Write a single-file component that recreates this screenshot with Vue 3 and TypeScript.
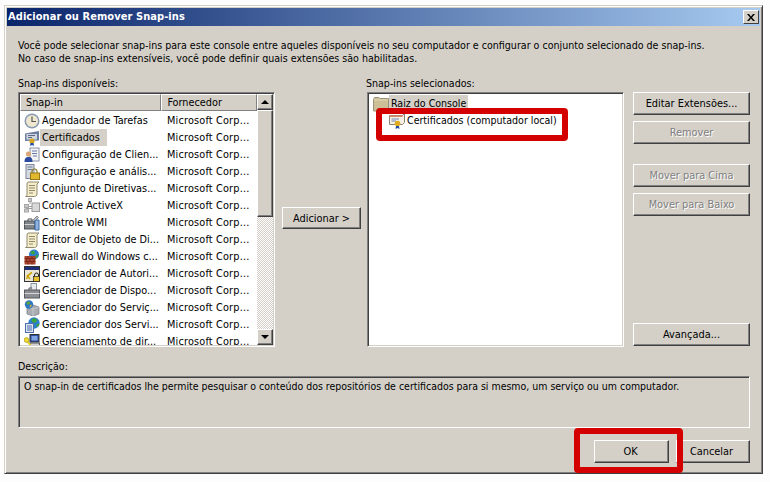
<script setup lang="ts">
interface Snapin { name: string; icon: string; selected?: boolean }
const snapins: Snapin[] = [
  { name: 'Agendador de Tarefas', icon: 'clock' },
  { name: 'Certificados', icon: 'cert', selected: true },
  { name: 'Configuração de Clien...', icon: 'client' },
  { name: 'Configuração e anális...', icon: 'lock' },
  { name: 'Conjunto de Diretivas...', icon: 'scroll' },
  { name: 'Controle ActiveX', icon: 'activex' },
  { name: 'Controle WMI', icon: 'wmi' },
  { name: 'Editor de Objeto de Di...', icon: 'scroll' },
  { name: 'Firewall do Windows c...', icon: 'firewall' },
  { name: 'Gerenciador de Autori...', icon: 'authz' },
  { name: 'Gerenciador de Dispo...', icon: 'device' },
  { name: 'Gerenciador do Serviç...', icon: 'service' },
  { name: 'Gerenciador dos Servi...', icon: 'services' },
  { name: 'Gerenciamento de dir...', icon: 'dirmgmt' },
]
</script>

<template>
  <svg class="defs" aria-hidden="true">
    <symbol id="clock" viewBox="0 0 16 16">
      <circle cx="8" cy="8" r="7.5" fill="#8a9ab5" />
      <circle cx="8" cy="8" r="6" fill="#efe8cf" />
      <path d="M8 3.5V8.5H12" fill="none" stroke="#555" stroke-width="1.2" />
    </symbol>
    <symbol id="cert" viewBox="0 0 16 16">
      <path d="M1 3.5 15 1V10.5L1 11Z" fill="#6d7f9e" />
      <rect x="2.5" y="4" width="10.5" height="5.5" fill="#cfd6df" />
      <path d="M4 5.5H11M4 7.5H8" stroke="#5c6a86" />
      <circle cx="8" cy="11" r="2.6" fill="#d9a520" />
      <path d="M6.5 13 6 16 8 15 10 16 9.5 13Z" fill="#1f4aa8" />
    </symbol>
    <symbol id="certdoc" viewBox="0 0 16 16">
      <path d="M0.500 2.500H13.500L15.500 0.500V9.500L13.500 11.500H0.500Z" fill="#f3efe4" stroke="#8c8470" />
      <path d="M0.500 2.500H13.500V4H0.500Z" fill="#d98a6a" />
      <path d="M2.500 6H10M2.500 8H7" stroke="#6f84b8" />
      <circle cx="8.500" cy="10.500" r="2.800" fill="#e0ab1e" />
      <path d="M7 13 6.500 16 8.500 15 10.500 16 10 13Z" fill="#1f4aa8" />
    </symbol>
    <symbol id="client" viewBox="0 0 16 16">
      <rect x="6" y="1" width="9" height="13" fill="#f3f3f3" stroke="#8a93a8" />
      <path d="M8 4h5M8 6.5h5M9 9h4" stroke="#6478a8" />
      <circle cx="4.5" cy="7" r="2.6" fill="#d9a878" />
      <path d="M0.5 15c0-4 1.5-5 4-5s4 1 4 5Z" fill="#2a4aa0" />
    </symbol>
    <symbol id="lock" viewBox="0 0 16 16">
      <rect x="2" y="0.5" width="8" height="14" fill="#d5dae2" stroke="#7c8698" />
      <path d="M3.5 3H8.5M3.5 5.5H8.5" stroke="#6f7c96" />
      <path d="M8 9V7.5a2.5 2.5 0 0 1 5 0V9" fill="none" stroke="#8c7a30" stroke-width="1.2" />
      <rect x="6.5" y="9" width="9" height="6.5" fill="#e2b92e" stroke="#96791a" />
    </symbol>
    <symbol id="scroll" viewBox="0 0 16 16">
      <path d="M4 1H15L13 3V13C13 14.5 12 15.5 10.500 15.500H1.500C3 15 3 14 3 13V3C3 2 3.500 1.300 4 1Z" fill="#f5edc8" stroke="#8f8a70" />
      <path d="M5 4.500H11M5 7H11M5 9.500H11M5 12H9" stroke="#8f8a70" />
    </symbol>
    <symbol id="activex" viewBox="0 0 16 16">
      <rect x="8" y="5" width="7.500" height="8.500" fill="#d8d8d8" stroke="#9a9a9a" />
      <path d="M4 8.500H8M6 3V6M2 10.500H8" stroke="#9a9a9a" />
      <rect x="0.500" y="6.500" width="4" height="3" fill="#c9c9c9" stroke="#a5a5a5" />
      <rect x="0.500" y="11" width="4" height="3" fill="#c9c9c9" stroke="#a5a5a5" />
      <rect x="4.500" y="0.500" width="3" height="3" fill="#c9c9c9" stroke="#a5a5a5" />
    </symbol>
    <symbol id="wmi" viewBox="0 0 16 16">
      <rect x="0.500" y="6" width="10" height="8" fill="#7f8488" stroke="#4e5256" />
      <path d="M0.500 9.500H10.500" stroke="#d0d2d4" />
      <path d="M4 6V4H8V6" fill="none" stroke="#4e5256" />
      <path d="M11 5H15V15H11Z" fill="#8fb4dd" stroke="#3f6aa8" />
      <path d="M9 5 13 1 14.500 2.500 12 5" fill="#b8bcc0" stroke="#6a6e72" stroke-width="0.700" />
    </symbol>
    <symbol id="firewall" viewBox="0 0 16 16">
      <circle cx="10" cy="5.500" r="5" fill="#2c7fd0" />
      <path d="M7 2.500C9 1 11 2 11 3.500S9 6 8 5 6 4 7 2.500ZM12 6 14.500 5.500 13 9 11 8.500Z" fill="#3da33b" />
      <rect x="0.500" y="7" width="11" height="8.500" fill="#a8432c" />
      <path d="M0.500 9.500H11.500M0.500 12.500H11.500M4 7V9.500M8 7V9.500M2.500 9.500V12.500M6 9.500V12.500M10 9.500V12.500M4 12.500V15.500M8 12.500V15.500" stroke="#6e2718" stroke-width="0.700" />
    </symbol>
    <symbol id="authz" viewBox="0 0 16 16">
      <rect x="0.500" y="0.500" width="15" height="15" fill="#e9e6d5" stroke="#333" />
      <rect x="1" y="1" width="14" height="3" fill="#1e2f78" />
      <path d="M2.500 13C4 9 5.500 7.500 8 6.500M3 9 6 13" fill="none" stroke="#c9a200" stroke-width="1.400" />
      <path d="M10.500 10.500V9a2 2 0 0 1 4 0V10.500" fill="none" stroke="#222" />
      <rect x="9.500" y="10.500" width="6" height="5" fill="#e7c02e" stroke="#222" stroke-width="0.700" />
    </symbol>
    <symbol id="device" viewBox="0 0 16 16">
      <rect x="7" y="0.500" width="5.500" height="7" fill="#e6eaef" stroke="#8c95a3" />
      <rect x="0.500" y="7" width="15" height="8" fill="#8b8f93" stroke="#54585c" />
      <path d="M0.500 10.500H15.500" stroke="#d5d7d9" />
      <path d="M5 7V5H8" fill="none" stroke="#54585c" />
    </symbol>
    <symbol id="service" viewBox="0 0 16 16">
      <path d="M3 7 9 5 15 7V14L9 16 3 14Z" fill="#a9adb1" stroke="#75797d" stroke-width="0.700" />
      <path d="M9 9V16M3 7 9 9 15 7" fill="none" stroke="#d5d7d9" stroke-width="0.700" />
      <circle cx="5" cy="4.500" r="4.200" fill="#2c78c4" />
      <path d="M2.500 2.500C4 1 6 1.500 6 3S4 5 3.500 4.500 2 4 2.500 2.500Z" fill="#5ba13e" />
      <path d="M6 5 8 4.500 7 7.500 5.500 7Z" fill="#c9a64a" />
    </symbol>
    <symbol id="services" viewBox="0 0 16 16">
      <circle cx="10" cy="6" r="5.700" fill="#2c7fd0" />
      <path d="M8 2C10 0.500 13 1.500 13 3.500S10 6 9 5.500 7 4 8 2ZM13 7 15.500 6.500 14 10 12 9.500Z" fill="#3da33b" />
      <rect x="1.500" y="6.500" width="8" height="9" fill="#dbe5f3" stroke="#4f6ea8" />
      <path d="M3 9H8M3 11H8M3 13H8" stroke="#4f6ea8" />
    </symbol>
    <symbol id="dirmgmt" viewBox="0 0 16 16">
      <rect x="6" y="0.500" width="9" height="7.500" fill="#2a4fa0" stroke="#333" />
      <rect x="7.500" y="2" width="6" height="4.500" fill="#7fa4e0" />
      <rect x="6" y="9" width="9.500" height="4" fill="#d0d2d6" stroke="#555" />
      <path d="M1 5 8.500 13.500" stroke="#e6d22a" stroke-width="1.800" />
      <circle cx="2.500" cy="6" r="2.400" fill="#f0dd30" stroke="#9a8a10" stroke-width="0.600" />
    </symbol>
    <symbol id="folder" viewBox="0 0 16 16">
      <path d="M0.500 3.500 1.500 1.500H6L7 2.500H15.500V15H0.500Z" fill="#cdbf98" stroke="#9c9278" />
      <path d="M1 4H15" stroke="#e4dab8" />
    </symbol>
  </svg>

  <div class="window">
    <div class="title">
      <span class="title-text">Adicionar ou Remover Snap-ins</span>
      <button class="close" type="button" aria-label="Fechar">
        <svg width="8" height="7" viewBox="0 0 8 7"><path d="M0 0H2L4 2.500 6 0H8L5 3.500 8 7H6L4 4.500 2 7H0L3 3.500Z" fill="#000" /></svg>
      </button>
    </div>

    <div class="content">
      <p class="intro">Você pode selecionar snap-ins para este console entre aqueles disponíveis no seu computador e configurar o conjunto selecionado de snap-ins.<br />No caso de snap-ins extensíveis, você pode definir quais extensões são habilitadas.</p>

      <div class="panes">
        <section class="pane">
          <div class="label">Snap-ins disponíveis:</div>
          <div class="sunken list">
            <div class="table">
              <div class="thead">
                <div class="th th-name">Snap-in</div>
                <div class="th th-vendor">Fornecedor</div>
              </div>
              <div v-for="s in snapins" :key="s.name" class="row">
                <svg class="icon" width="16" height="16"><use :href="'#' + s.icon" /></svg>
                <div class="cell-name"><span class="name" :class="{ selected: s.selected }">{{ s.name }}</span></div>
                <div class="cell-vendor">Microsoft Corp...</div>
              </div>
            </div>
            <div class="scrollbar">
              <div class="sb-btn"><i class="arrow up"></i></div>
              <div class="sb-thumb"></div>
              <div class="sb-track"></div>
              <div class="sb-btn"><i class="arrow down"></i></div>
            </div>
          </div>
        </section>

        <div class="mid">
          <button class="btn add" type="button">Adicionar &gt;</button>
        </div>

        <section class="pane">
          <div class="label sel-label">Snap-ins selecionados:</div>
          <div class="sunken tree">
            <div class="node root">
              <svg class="icon" width="16" height="16"><use href="#folder" /></svg>
              <span class="node-text">Raiz do Console</span>
            </div>
            <div class="node child">
              <svg class="icon" width="16" height="16"><use href="#certdoc" /></svg>
              <span class="node-text">Certificados (computador local)</span>
            </div>
          </div>
        </section>

        <div class="side">
          <button class="btn" type="button">Editar Extensões...</button>
          <button class="btn off" type="button">Remover</button>
          <button class="btn off gap-top" type="button">Mover para Cima</button>
          <button class="btn off" type="button">Mover para Baixo</button>
          <button class="btn last" type="button">Avançada...</button>
        </div>
      </div>

      <div class="label desc-label">Descrição:</div>
      <div class="desc">O snap-in de certificados lhe permite pesquisar o conteúdo dos repositórios de certificados para si mesmo, um serviço ou um computador.</div>

      <div class="actions">
        <button class="btn ok" type="button">OK</button>
        <button class="btn cancel" type="button">Cancelar</button>
      </div>
    </div>

    <div class="mark mark-cert"></div>
    <div class="mark mark-ok"></div>
  </div>
</template>

<style>
html, body { margin: 0; background: #fdfdfd; }
</style>

<style scoped>
.defs { position: absolute; width: 0; height: 0; overflow: hidden; }
.window {
  position: relative;
  box-sizing: border-box;
  width: 759px;
  height: 469px;
  margin: 5px 0 0 4px;
  padding: 2px;
  background: #d4d0c8;
  border: 1px solid;
  border-color: #d4d0c8 #404040 #404040 #d4d0c8;
  box-shadow: inset 1px 1px 0 #fff, inset -1px -1px 0 #808080;
  font: 10.55px/13px "DejaVu Sans", sans-serif;
  font-stretch: condensed;
  color: #000;
}
.title {
  height: 18px;
  display: flex;
  align-items: center;
  justify-content: space-between;
  padding: 0 1px 0 1px;
  background: linear-gradient(90deg, #0a246a, #a6caf0);
}
.title-text { color: #fff; font: bold 11px/18px "DejaVu Sans", sans-serif; font-stretch: condensed; letter-spacing: 0.07px; }
.close {
  box-sizing: border-box;
  width: 16px;
  height: 14px;
  padding: 0;
  display: flex;
  align-items: center;
  justify-content: center;
  background: #d4d0c8;
  border: 1px solid;
  border-color: #fff #404040 #404040 #fff;
}
.content { padding: 13px 10px 0 11px; }
.intro { margin: 0 0 12px; white-space: nowrap; font-size: 10.58px; }
.panes { display: flex; }
.pane { width: 257px; display: flex; flex-direction: column; }
.label { height: 13px; margin-bottom: 2px; white-space: nowrap; }
.sel-label { margin-left: -1px; }
.sunken {
  box-sizing: border-box;
  height: 255px;
  background: #fff;
  border: 1px solid;
  border-color: #808080 #fff #fff #808080;
  box-shadow: inset 1px 1px 0 #404040, inset -1px -1px 0 #d4d0c8;
}
.list { display: flex; padding: 1px; overflow: hidden; }
.table { width: 238px; overflow: hidden; font-size: 10.8px; }
.thead { display: flex; height: 17px; margin-bottom: 1px; }
.th {
  box-sizing: border-box;
  background: #d4d0c8;
  border: 1px solid;
  border-color: #fff #808080 #808080 #fff;
  line-height: 15px;
  white-space: nowrap;
}
.th-name { width: 142px; padding-left: 5px; }
.th-vendor { width: 96px; padding-left: 5px; }
.row { display: flex; height: 17px; align-items: center; white-space: nowrap; }
.icon { flex: none; }
.row .icon { margin-left: 4px; }
.cell-name { width: 122px; flex: none; display: flex; }
.name { padding: 0 2px; line-height: 17px; }
.selected { background: #d4d0c8; padding-right: 7px; }
.cell-vendor { padding-left: 5px; letter-spacing: 0.18px; }
.scrollbar { width: 16px; flex: none; display: flex; flex-direction: column; }
.sb-btn, .sb-thumb {
  box-sizing: border-box;
  background: #d4d0c8;
  border: 1px solid;
  border-color: #fff #404040 #404040 #fff;
  box-shadow: inset -1px -1px 0 #808080;
}
.sb-btn { height: 16px; display: flex; align-items: center; justify-content: center; flex: none; }
.sb-thumb { height: 107px; flex: none; }
.sb-track { flex: 1; background: repeating-conic-gradient(#d4d0c8 0 25%, #fff 0 50%) 0 0 / 2px 2px; }
.arrow { width: 0; height: 0; border-left: 4px solid transparent; border-right: 4px solid transparent; }
.arrow.up { border-bottom: 4px solid #000; }
.arrow.down { border-top: 4px solid #000; }
.mid { width: 92px; padding: 130px 0 0 7px; box-sizing: border-box; }
.btn {
  box-sizing: border-box;
  display: block;
  padding: 0;
  height: 23px;
  width: 117px;
  font: inherit;
  font-size: 10.9px;
  font-stretch: inherit;
  color: #000;
  text-align: center;
  white-space: nowrap;
  background: #d4d0c8;
  border: 1px solid;
  border-color: #fff #404040 #404040 #fff;
  box-shadow: inset -1px -1px 0 #808080;
}
.add { width: 79px; height: 22px; }
.off { color: #808080; text-shadow: 1px 1px 0 #fff; }
.side { display: flex; flex-direction: column; margin-left: 9px; padding-top: 15px; gap: 6px; }
.side .gap-top { margin-top: 14px; }
.side .last { margin-top: auto; margin-bottom: 1px; }
.tree { padding: 2px 1px 1px; }
.node { display: flex; align-items: center; height: 17px; white-space: nowrap; }
.root { padding-left: 4px; }
.root .node-text { background: #d4d0c8; padding: 0 2px 0 2px; line-height: 17px; }
.child { padding-left: 20px; }
.child .node-text { margin-left: 2px; }
.desc-label { margin: 13px 0 3px; }
.desc {
  box-sizing: border-box;
  height: 52px;
  padding: 3px 5px;
  border: 1px solid;
  border-color: #808080 #fff #fff #808080;
  box-shadow: inset 1px 1px 0 #404040;
  white-space: nowrap;
  font-size: 10.48px;
}
.actions { display: flex; justify-content: flex-end; gap: 7px; margin-top: 12px; }
.ok { width: 75px; padding-right: 2px; }
.cancel { width: 74px; padding-right: 3px; }
.mark {
  position: absolute;
  box-sizing: border-box;
  border: 6px solid #d40000;
  border-radius: 4px;
}
.mark-cert { left: 371px; top: 102px; width: 192px; height: 33px; }
.mark-ok { left: 569px; top: 422px; width: 109px; height: 45px; }
</style>
